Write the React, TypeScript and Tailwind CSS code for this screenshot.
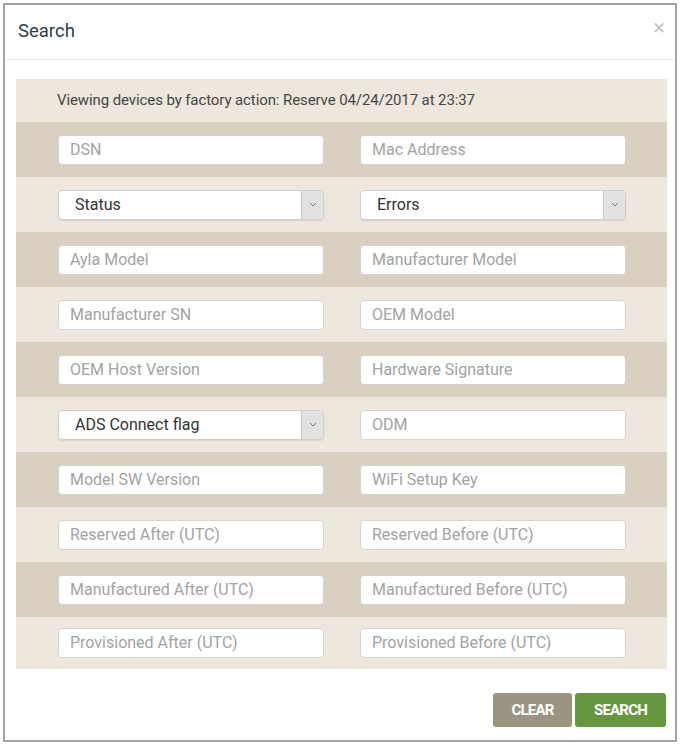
import React from 'react';

type Field = { label: string; kind: 'input' | 'select' };

const rows: [Field, Field][] = [
  [{ label: 'DSN', kind: 'input' }, { label: 'Mac Address', kind: 'input' }],
  [{ label: 'Status', kind: 'select' }, { label: 'Errors', kind: 'select' }],
  [{ label: 'Ayla Model', kind: 'input' }, { label: 'Manufacturer Model', kind: 'input' }],
  [{ label: 'Manufacturer SN', kind: 'input' }, { label: 'OEM Model', kind: 'input' }],
  [{ label: 'OEM Host Version', kind: 'input' }, { label: 'Hardware Signature', kind: 'input' }],
  [{ label: 'ADS Connect flag', kind: 'select' }, { label: 'ODM', kind: 'input' }],
  [{ label: 'Model SW Version', kind: 'input' }, { label: 'WiFi Setup Key', kind: 'input' }],
  [{ label: 'Reserved After (UTC)', kind: 'input' }, { label: 'Reserved Before (UTC)', kind: 'input' }],
  [{ label: 'Manufactured After (UTC)', kind: 'input' }, { label: 'Manufactured Before (UTC)', kind: 'input' }],
  [{ label: 'Provisioned After (UTC)', kind: 'input' }, { label: 'Provisioned Before (UTC)', kind: 'input' }],
];

const FieldBox: React.FC<{ field: Field }> = ({ field }) => {
  if (field.kind === 'select') {
    return (
      <div className="h-[30px] flex items-stretch bg-white border border-[#cfcfcf] rounded-[4px] overflow-hidden shadow-[0_1px_1px_rgba(0,0,0,0.08)]">
        <div className="flex-1 flex items-center pl-[16px] text-[16px] text-[#333]">{field.label}</div>
        <div className="w-[22px] bg-[#e2e2e2] border-l border-[#c8c8c8] flex items-center justify-center">
          <svg width="8" height="5" viewBox="0 0 8 5" fill="none">
            <path d="M0.8 0.8 L4 4 L7.2 0.8" stroke="#777" strokeWidth="1" />
          </svg>
        </div>
      </div>
    );
  }
  return (
    <div className="h-[30px] flex items-center bg-white border border-[#d4d4d4] rounded-[4px] pl-[11px] text-[16px] text-[#a3a3a3]">
      {field.label}
    </div>
  );
};

export default function App() {
  return (
    <div className="min-h-screen bg-white pt-[3px] pl-[3px]" style={{ fontFamily: 'Roboto, "Liberation Sans", sans-serif' }}>
      <div className="w-[674px] h-[739px] border-2 border-[#a4a4a4] flex flex-col">
        <div className="h-[55px] border-b border-[#e6e6e6] flex items-center justify-between pl-[13px] pr-[10px]">
          <span className="text-[18.5px] text-[#2e3d4b]">Search</span>
          <span className="text-[22px] leading-none text-[#c4c4c4] -mt-[9px]">×</span>
        </div>
        <div className="pt-[19px] pl-[11px] pr-[8px]">
          <div className="bg-[#ede7de]">
            <div className="h-[43px] flex items-center pl-[41px] text-[15px] tracking-[-0.1px] text-[#464646]">
              Viewing devices by factory action: Reserve 04/24/2017 at 23:37
            </div>
            {rows.map((r, i) => (
              <div
                key={i}
                className={`${i % 2 === 0 ? 'bg-[#d9d0c2]' : 'bg-[#ede7de]'} ${i === rows.length - 1 ? 'h-[52px]' : 'h-[55px]'} grid grid-cols-2 gap-[36px] items-center pl-[42px] pr-[41px]`}
              >
                <FieldBox field={r[0]} />
                <FieldBox field={r[1]} />
              </div>
            ))}
          </div>
        </div>
        <div className="flex justify-end gap-[3px] pr-[9px] pt-[24px]">
          <button className="w-[79px] h-[34px] rounded-[3px] bg-[#9a9582] text-white text-[15px] font-bold tracking-[-0.8px]">CLEAR</button>
          <button className="w-[91px] h-[34px] rounded-[3px] bg-[#66973f] text-white text-[15px] font-bold tracking-[-0.8px]">SEARCH</button>
        </div>
      </div>
    </div>
  );
}
